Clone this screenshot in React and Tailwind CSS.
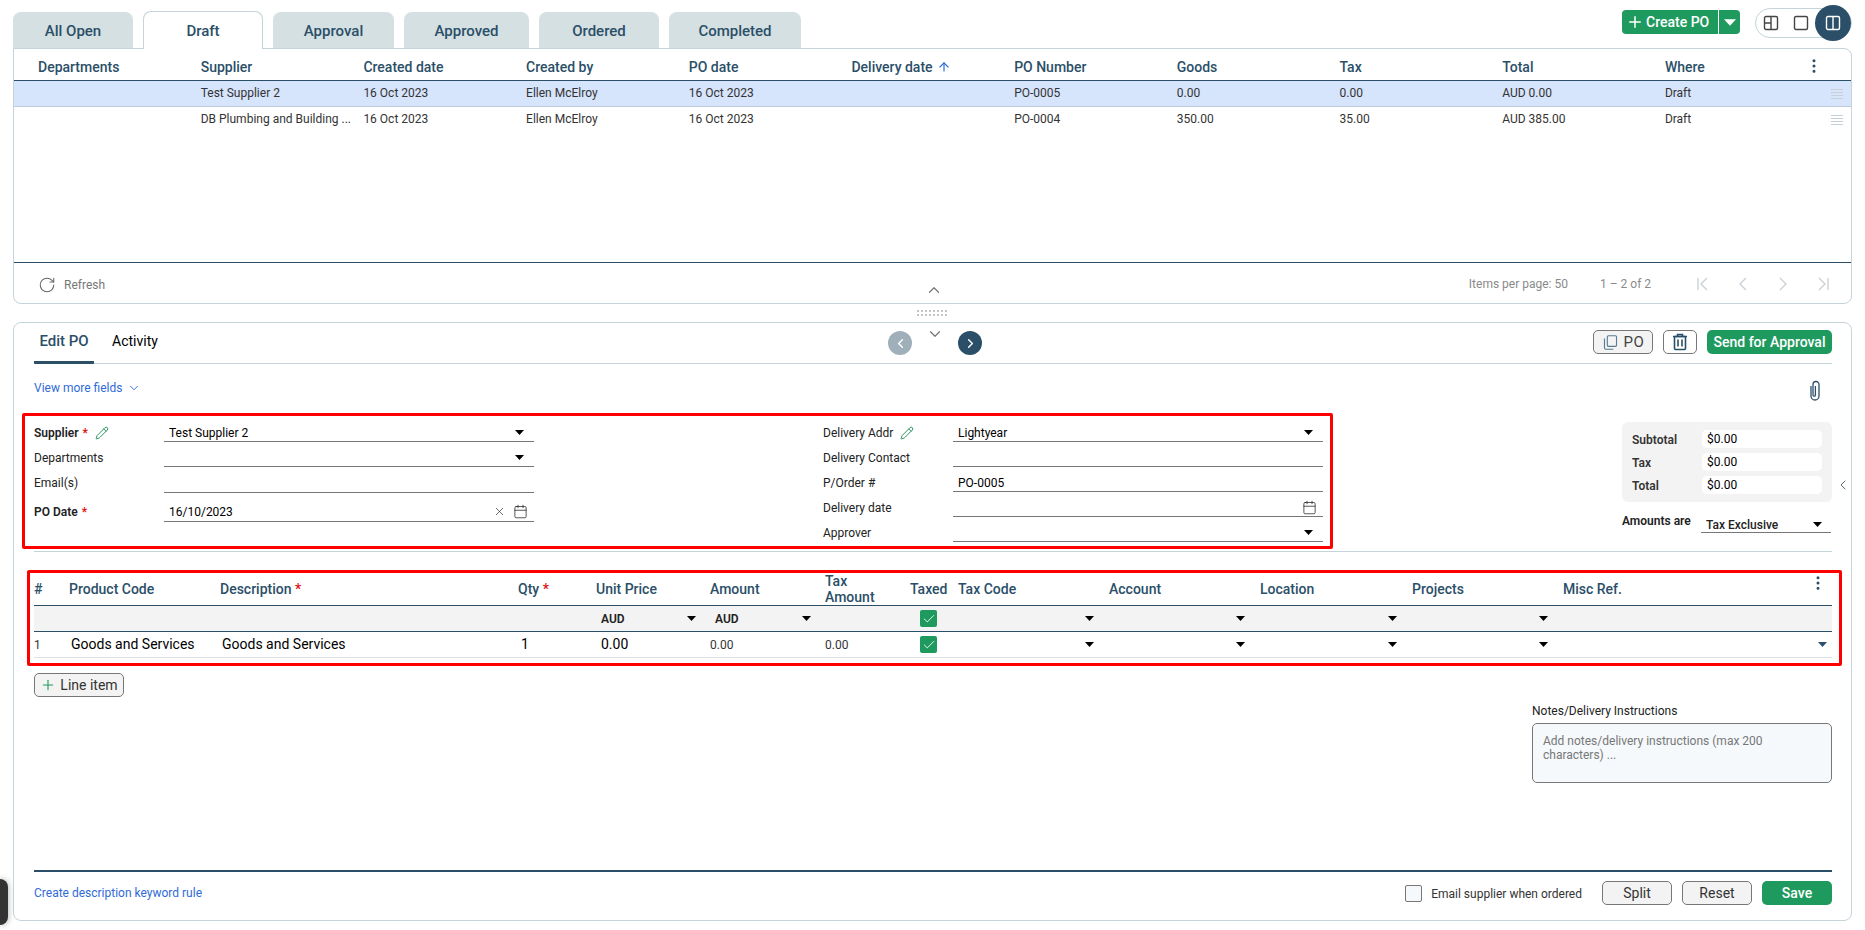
import React from "react";
import { ArrowUp, Calendar, Check, ChevronDown, ChevronLeft, ChevronRight, ChevronUp, EllipsisVertical, Pencil, Plus, RotateCw, X } from "lucide-react";

const tabs = [
  { label: "All Open", w: "w-[120px]" },
  { label: "Draft", w: "w-[120px]", active: true },
  { label: "Approval", w: "w-[121px]" },
  { label: "Approved", w: "w-[125px]" },
  { label: "Ordered", w: "w-[120px]" },
  { label: "Completed", w: "w-[132px]" },
];

const columns = ["Departments", "Supplier", "Created date", "Created by", "PO date", "Delivery date", "PO Number", "Goods", "Tax", "Total", "Where"];

const rows = [
  ["", "Test Supplier 2", "16 Oct 2023", "Ellen McElroy", "16 Oct 2023", "", "PO-0005", "0.00", "0.00", "AUD 0.00", "Draft"],
  ["", "DB Plumbing and Building ...", "16 Oct 2023", "Ellen McElroy", "16 Oct 2023", "", "PO-0004", "350.00", "35.00", "AUD 385.00", "Draft"],
];

const lineCols = "grid-cols-[35px_151px_298px_78px_114px_115px_85px_48px_151px_151px_152px_151px_269px]";

function Caret({ className = "text-black", width = 9, height = 5 }) {
  return (
    <svg width={width} height={height} viewBox="0 0 9 5" className={className}>
      <path d="M0 0h9L4.5 5z" fill="currentColor" />
    </svg>
  );
}

function DragLines() {
  return (
    <svg width="12" height="11" viewBox="0 0 12 11" className="text-[#c8d0d6]">
      <path d="M0 .5h12M0 3.5h12M0 6.5h12M0 9.5h12" stroke="currentColor" />
    </svg>
  );
}

function PageIcon({ d }) {
  return (
    <svg width="16" height="16" viewBox="0 0 16 16" fill="none" stroke="#c9cfd3" strokeWidth="1.3">
      <path d={d} />
    </svg>
  );
}

function LayoutIcon({ kind, className }) {
  return (
    <svg width="16" height="16" viewBox="0 0 16 16" fill="none" stroke="currentColor" strokeWidth="1.4" className={className}>
      <rect x="1.5" y="1.5" width="13" height="13" rx="1.5" />
      {kind === "grid" && <path d="M8 1.5v13M1.5 8H8" />}
      {kind === "split" && <path d="M8 1.5v13" />}
    </svg>
  );
}

function Field({ label, bold, required, edit, value, caret, date, clear, height = "h-[25px]", top = "pt-[7px]" }) {
  return (
    <div className={`flex ${height}`}>
      <div className={`w-[130px] ${top} flex items-center gap-[4px] text-[12px] text-[#222] ${bold ? "font-semibold" : ""}`}>
        <span>{label}</span>
        {required && <span className="text-[#e01010]">*</span>}
        {edit && <Pencil size={14} strokeWidth={1.6} className="text-[#1f8f58] ml-[3px]" />}
      </div>
      <div className={`w-[370px] border-b border-[#777] ${top} pl-[5px] pr-[10px] flex items-center justify-between text-[12px] text-black`}>
        <span>{value}</span>
        <span className="flex items-center gap-[7px]">
          {clear && <X size={13} strokeWidth={1.3} className="text-[#333]" />}
          {date && <Calendar size={15} strokeWidth={1.2} className="text-[#222] -mr-[4px]" />}
          {caret && <Caret />}
        </span>
      </div>
    </div>
  );
}

function TotalRow({ label, value }) {
  return (
    <div className="flex items-center h-[18px]">
      <span className="w-[70px] pt-[1px] text-[12px] font-semibold text-[#333]">{label}</span>
      <span className="w-[120px] h-[18px] bg-white rounded-[5px] pl-[5px] text-[12px] leading-[18px] text-black">{value}</span>
    </div>
  );
}

function LineHead({ children, star }) {
  return (
    <div className="text-[14px] leading-[16px] font-medium text-[#2b4f68]">
      {children}
      {star && <span className="text-[#e01010]"> *</span>}
    </div>
  );
}

function GreenCheck() {
  return (
    <div className="pl-[10px]">
      <div className="w-[17px] h-[17px] rounded-[2px] bg-[#1f9a5e] flex items-center justify-center">
        <Check size={14} strokeWidth={1.5} className="text-white" />
      </div>
    </div>
  );
}

function CaretCell() {
  return (
    <div className="flex justify-end pr-[15px]">
      <Caret />
    </div>
  );
}

export default function App() {
  return (
    <div className="relative w-[1865px] h-[930px] overflow-hidden bg-white pl-[13px] pr-[13px] font-['Roboto',sans-serif]">
      {/* tabs + create button */}
      <div className="flex h-[48px] relative z-10">
        <div className="flex gap-[10px] items-end">
          {tabs.map((t) =>
            t.active ? (
              <div key={t.label} className={`${t.w} h-[38px] -mb-px pt-[2px] bg-white border border-b-0 border-[#c5d3da] rounded-t-[8px] flex items-center justify-center text-[15px] font-medium text-[#2b4f68]`}>
                {t.label}
              </div>
            ) : (
              <div key={t.label} className={`${t.w} h-[36px] pt-[2px] bg-[#d5e0e3] rounded-t-[8px] flex items-center justify-center text-[15px] font-medium text-[#2b4f68]`}>
                {t.label}
              </div>
            )
          )}
        </div>
        <div className="ml-auto flex items-start">
          <div className="mt-[10px] h-[24px] w-[118px] flex bg-[#1f9a5e] rounded-[4px] text-white">
            <div className="w-[97px] flex items-center pl-[4px] gap-[2px] text-[14px] font-medium border-r border-white">
              <Plus size={18} strokeWidth={2} />
              Create PO
            </div>
            <div className="flex-1 flex items-center justify-center">
              <Caret className="text-white" width={12} height={7} />
            </div>
          </div>
          <div className="ml-[15px] mt-[8px] h-[30px] w-[97px] border border-[#c5d3da] rounded-full flex items-center relative pl-[7px] gap-[14px] text-[#444]">
            <LayoutIcon kind="grid" />
            <LayoutIcon kind="single" />
            <div className="absolute right-0 -top-[4px] w-[36px] h-[36px] rounded-full bg-[#2b4f68] flex items-center justify-center text-white">
              <LayoutIcon kind="split" />
            </div>
          </div>
        </div>
      </div>

      {/* purchase order list */}
      <div className="h-[256px] border border-[#c5d3da] rounded-b-[8px] rounded-tr-[8px] flex flex-col">
        <div className="h-[32px] pt-[5px] border-b-[1.5px] border-[#2b4f68] grid grid-cols-[repeat(10,162.7px)_1fr] pl-[24px] pr-[8px] items-center">
          {columns.map((c, i) => (
            <div key={c} className="text-[14px] font-medium text-[#2b4f68] flex items-center">
              {c}
              {c === "Delivery date" && <ArrowUp size={14} strokeWidth={2} className="text-[#2a6bd6] ml-[4px]" />}
              {i === 10 && <EllipsisVertical size={18} className="ml-auto mr-[20px] -mt-[2px]" />}
            </div>
          ))}
        </div>
        {rows.map((r, idx) => (
          <div key={r[6]} className={`h-[26px] pb-[2px] grid grid-cols-[repeat(10,162.7px)_1fr] pl-[24px] pr-[8px] items-center text-[12px] text-[#333] ${idx === 0 ? "bg-[#d6e4fc] border-b border-[#bccde0]" : ""}`}>
            {r.map((v, i) => (
              <div key={i} className="flex items-center">
                {v}
                {i === 10 && (
                  <span className="ml-auto mt-[3px]">
                    <DragLines />
                  </span>
                )}
              </div>
            ))}
          </div>
        ))}
        <div className="mt-auto h-[41px] pt-[2px] border-t-[1.5px] border-[#2b4f68] flex items-center">
          <div className="w-[906px] pl-[24px] pt-[2px] flex items-center gap-[8px] text-[12px] text-[#777]">
            <RotateCw size={18} strokeWidth={1.4} className="text-[#666]" />
            Refresh
          </div>
          <ChevronUp size={18} strokeWidth={1.6} className="text-[#777] mt-[12px] ml-[5px]" />
          <div className="ml-auto flex items-center text-[12px] text-[#8a8a8a]">
            <span>Items per page: 50</span>
            <span className="ml-[32px] w-[95px]">1 – 2 of 2</span>
            <div className="flex gap-[24px] pr-[20px]">
              <PageIcon d="M3 2v12M12 2L6 8l6 6" />
              <PageIcon d="M11 2L5 8l6 6" />
              <PageIcon d="M5 2l6 6-6 6" />
              <PageIcon d="M13 2v12M4 2l6 6-6 6" />
            </div>
          </div>
        </div>
      </div>

      {/* splitter */}
      <div className="h-[18px] flex items-center justify-center">
        <svg width="30" height="6" viewBox="0 0 30 6" className="text-[#c4c4c4] mr-[1px]">
          <path d="M0 1h30M0 5h30" stroke="currentColor" strokeWidth="2" strokeDasharray="2 2" />
        </svg>
      </div>

      {/* edit panel */}
      <div className="relative h-[599px] border border-[#c5d3da] rounded-[8px] pl-[20px] pr-[19px] flex flex-col">
        <div className="h-[41px] border-b border-[#c5d3da] flex">
          <div className="w-[854px] flex text-[14px]">
            <div className="w-[60px] h-[41px] border-b-[3px] border-[#2b4f68] rounded-b-[1px] flex items-center justify-center pb-[2px] text-[15px] font-medium text-[#2b4f68]">
              Edit PO
            </div>
            <div className="ml-[18px] pb-[3px] flex items-center text-black">Activity</div>
          </div>
          <div className="w-[94px] flex justify-between pt-[8px]">
            <div className="w-[24px] h-[24px] rounded-full bg-[#a0b0ba] flex items-center justify-center text-white">
              <ChevronLeft size={15} strokeWidth={2.2} />
            </div>
            <ChevronDown size={18} strokeWidth={1.6} className="text-[#777] -mt-[6px]" />
            <div className="w-[24px] h-[24px] rounded-full bg-[#2b4f68] flex items-center justify-center text-white">
              <ChevronRight size={15} strokeWidth={2.2} />
            </div>
          </div>
          <div className="flex-1 flex justify-end gap-[10px] pt-[7px] pr-0">
            <div className="w-[60px] h-[24px] rounded-[5px] border border-[#777] bg-[#f3f3f3] flex items-center justify-center gap-[5px] text-[15px] tracking-[0.5px] text-[#444]">
              <svg width="17" height="17" viewBox="0 0 24 24" fill="none" stroke="#5a7c95" strokeWidth="1.6">
                <rect x="7.5" y="2.5" width="13" height="15" rx="1.5" />
                <path d="M3.5 6.5v13A2 2 0 0 0 5.5 21.5H16" />
              </svg>
              PO
            </div>
            <div className="w-[34px] h-[24px] rounded-[5px] border border-[#777] flex items-center justify-center">
              <svg width="16" height="18" viewBox="0 0 16 18" fill="none" stroke="#2b4f68" strokeWidth="1.6">
                <path d="M1 3.5h14M5.5 3V1.5h5V3" />
                <rect x="2.5" y="3.5" width="11" height="13" rx="1" />
                <path d="M6 6.5v7M10 6.5v7" />
              </svg>
            </div>
            <div className="w-[125px] h-[24px] rounded-[5px] bg-[#1f9a5e] flex items-center justify-center text-[14px] font-medium text-white">
              Send for Approval
            </div>
          </div>
        </div>

        <div className="h-[49px] flex items-start justify-between">
          <div className="mt-[15px] flex items-center gap-[5px] text-[12px] text-[#2f6bd8]">
            View more fields
            <ChevronDown size={14} strokeWidth={1.6} />
          </div>
          <svg width="14" height="22" viewBox="0 0 14 22" fill="none" stroke="#2b4f68" strokeWidth="1.3" className="mt-[16px] mr-[10px]">
            <path d="M3 6v10a4 4 0 0 0 8 0V4.5a3 3 0 0 0-6 0V15a1 1 0 0 0 2.4 0V6" />
          </svg>
        </div>

        <div className="h-[139px] border-b border-[#c5d3da] flex">
          <div className="-ml-[12px] w-[1311px] h-[136px] border-[3px] border-[#ff0000] rounded-[2px] pl-[9px] pt-[1px] flex gap-[289px]">
            <div>
              <Field label="Supplier" bold required edit value="Test Supplier 2" caret />
              <Field label="Departments" caret />
              <Field label="Email(s)" height="h-[26px]" top="pt-[5px]" />
              <Field label="PO Date" bold required value="16/10/2023" clear date height="h-[29px]" top="pt-[9px]" />
            </div>
            <div>
              <Field label="Delivery Addr" edit value="Lightyear" caret />
              <Field label="Delivery Contact" />
              <Field label="P/Order #" value="PO-0005" />
              <Field label="Delivery date" date />
              <Field label="Approver" caret />
            </div>
          </div>
          <div className="ml-auto w-[210px] pt-[9px]">
            <div className="bg-[#f3f3f3] rounded-[6px] h-[80px] pl-[10px] pt-[8px] flex flex-col gap-[5px]">
              <TotalRow label="Subtotal" value="$0.00" />
              <TotalRow label="Tax" value="$0.00" />
              <TotalRow label="Total" value="$0.00" />
            </div>
            <div className="mt-[8px] flex">
              <span className="w-[79px] h-[22px] flex items-center text-[12px] font-semibold text-[#222]">Amounts are</span>
              <div className="w-[130px] h-[23px] border-b border-[#777] pt-[7px] pl-[5px] pr-[9px] flex items-center justify-between text-[12px] font-medium text-[#222]">
                Tax Exclusive
                <Caret />
              </div>
            </div>
          </div>
        </div>

        <div className="mt-[18px] -ml-[7px] -mr-[10px] h-[96px] border-[3px] border-[#ff0000] rounded-[2px] pl-[4px] pr-[7px]">
          <div className={`h-[33px] grid ${lineCols} items-center border-b-[1.5px] border-[#2b4f68]`}>
            <LineHead>#</LineHead>
            <LineHead>Product Code</LineHead>
            <LineHead star>Description</LineHead>
            <LineHead star>Qty</LineHead>
            <LineHead>Unit Price</LineHead>
            <LineHead>Amount</LineHead>
            <LineHead>
              Tax
              <br />
              Amount
            </LineHead>
            <LineHead>Taxed</LineHead>
            <LineHead>Tax Code</LineHead>
            <LineHead>Account</LineHead>
            <LineHead>Location</LineHead>
            <LineHead>Projects</LineHead>
            <div className="flex items-center">
              <LineHead>Misc Ref.</LineHead>
              <EllipsisVertical size={18} className="ml-auto mr-[5px] -mt-[12px] text-[#2b4f68]" />
            </div>
          </div>
          <div className={`h-[26px] grid ${lineCols} items-center bg-[#f3f3f3] border-b-[1.5px] border-[#2b4f68] text-[12px] font-semibold text-[#222]`}>
            <div />
            <div />
            <div />
            <div />
            <div className="pl-[5px] w-[100px] flex items-center justify-between">
              AUD
              <Caret />
            </div>
            <div className="pl-[5px] w-[101px] flex items-center justify-between">
              AUD
              <Caret />
            </div>
            <div />
            <GreenCheck />
            <CaretCell />
            <CaretCell />
            <CaretCell />
            <CaretCell />
            <div />
          </div>
          <div className={`h-[26px] grid ${lineCols} items-center border-b border-[#e0e0e0] text-[14px] text-black`}>
            <div className="text-[12px] text-[#333]">1</div>
            <div className="pl-[2px]">Goods and Services</div>
            <div className="pl-[2px]">Goods and Services</div>
            <div className="pl-[3px]">1</div>
            <div className="pl-[5px]">0.00</div>
            <div className="text-[12px] text-[#333]">0.00</div>
            <div className="text-[12px] text-[#333]">0.00</div>
            <GreenCheck />
            <CaretCell />
            <CaretCell />
            <CaretCell />
            <CaretCell />
            <div className="flex justify-end pr-[5px]">
              <Caret className="text-[#2b4f68]" />
            </div>
          </div>
        </div>

        <div className="mt-[7px] w-[90px] h-[24px] rounded-[5px] border border-[#777] bg-[#f3f3f3] flex items-center justify-center gap-[4px] text-[14px] text-[#333]">
          <Plus size={16} strokeWidth={1.6} className="text-[#1f9a5e]" />
          Line item
        </div>

        <div className="mt-[7px] self-end w-[300px]">
          <div className="h-[14px] text-[12px] leading-[14px] text-[#222]">Notes/Delivery Instructions</div>
          <div className="mt-[5px] h-[60px] rounded-[5px] border border-[#777] bg-[#f5f9fc] pl-[10px] pr-[8px] pt-[10px] text-[12px] leading-[14px] text-[#777]">
            Add notes/delivery instructions (max 200 characters) ...
          </div>
        </div>

        <div className="mt-auto h-[50px] border-t-2 border-[#2b4f68] flex items-start pt-[9px]">
          <span className="mt-[3px] text-[12px] text-[#2f6bd8]">Create description keyword rule</span>
          <div className="ml-auto flex items-center">
            <span className="w-[17px] h-[17px] rounded-[2px] border border-[#777] bg-[#f5f9fc]" />
            <span className="ml-[9px] mt-[1px] text-[12px] text-[#333]">Email supplier when ordered</span>
            <div className="ml-[20px] w-[70px] h-[24px] rounded-[5px] border border-[#777] bg-[#f3f3f3] flex items-center justify-center text-[14px] text-[#333]">Split</div>
            <div className="ml-[10px] w-[70px] h-[24px] rounded-[5px] border border-[#777] bg-[#f3f3f3] flex items-center justify-center text-[14px] text-[#333]">Reset</div>
            <div className="ml-[10px] w-[70px] h-[24px] rounded-[5px] bg-[#1f9a5e] flex items-center justify-center text-[14px] font-medium text-white">Save</div>
          </div>
        </div>

        <ChevronLeft size={16} strokeWidth={1.5} className="absolute right-[0px] top-[154px] text-[#666]" />
      </div>

      {/* floating widget in the corner */}
      <div className="absolute left-0 bottom-[5px] w-[8px] h-[46px] bg-[#333] rounded-r-[8px] shadow-[0_0_6px_rgba(0,0,0,0.35)]" />
    </div>
  );
}
